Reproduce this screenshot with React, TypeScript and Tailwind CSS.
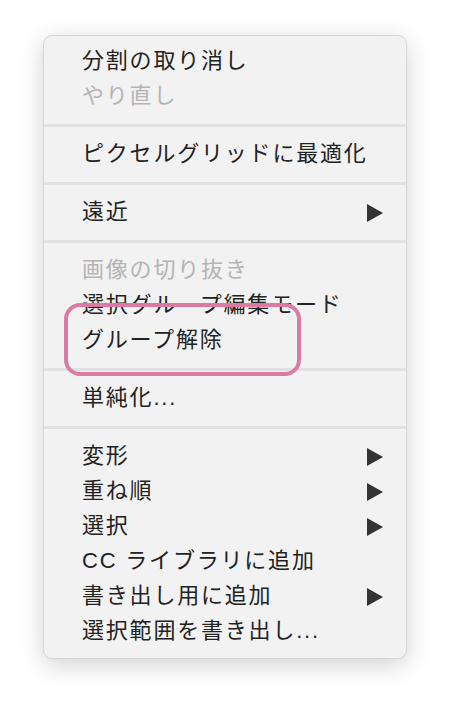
import React from 'react';

type Item = { label: string; disabled?: boolean; submenu?: boolean };

const groups: Item[][] = [
  [{ label: '分割の取り消し' }, { label: 'やり直し', disabled: true }],
  [{ label: 'ピクセルグリッドに最適化' }],
  [{ label: '遠近', submenu: true }],
  [
    { label: '画像の切り抜き', disabled: true },
    { label: '選択グループ編集モード' },
    { label: 'グループ解除' },
  ],
  [{ label: '単純化...' }],
  [
    { label: '変形', submenu: true },
    { label: '重ね順', submenu: true },
    { label: '選択', submenu: true },
    { label: 'CC ライブラリに追加' },
    { label: '書き出し用に追加', submenu: true },
    { label: '選択範囲を書き出し...' },
  ],
];

const Arrow: React.FC = () => (
  <svg width="16" height="18" viewBox="0 0 16 18" className="shrink-0">
    <path d="M0 0 L16 9 L0 18 Z" fill="#333333" />
  </svg>
);

const MenuRow: React.FC<{ item: Item }> = ({ item }) => (
  <div className="flex items-center justify-between h-[35px] pl-[38px] pr-[23px]">
    <span
      className={`mb-[1px] text-[22px] tracking-[1.8px] leading-none whitespace-nowrap ${
        item.disabled ? 'text-[#b4b4b4]' : 'text-[#222222]'
      }`}
    >
      {item.label}
    </span>
    {item.submenu && <Arrow />}
  </div>
);

const App: React.FC = () => {
  return (
    <div
      className="w-[450px] h-[707px] bg-white pt-[35px] pl-[43px]"
      style={{ fontFamily: '"Liberation Sans", "Noto Sans CJK JP", sans-serif' }}
    >
      <div className="relative w-[364px] bg-[#f2f2f2] rounded-[9px] border border-[#d6d6d6] pt-[8px] pb-[9px] shadow-[0_6px_24px_rgba(0,0,0,0.18)]">
        {groups.map((group, gi) => (
          <React.Fragment key={gi}>
            {gi > 0 && <div className="my-[10px] h-[3px] bg-[#e1e1e1]" />}
            {group.map((item) => (
              <MenuRow key={item.label} item={item} />
            ))}
          </React.Fragment>
        ))}
        {/* annotation */}
        <div className="absolute left-[20px] top-[267px] w-[237px] h-[73px] rounded-[16px] border-[4px] border-[#dc7ba2]" />
      </div>
    </div>
  );
};

export default App;
